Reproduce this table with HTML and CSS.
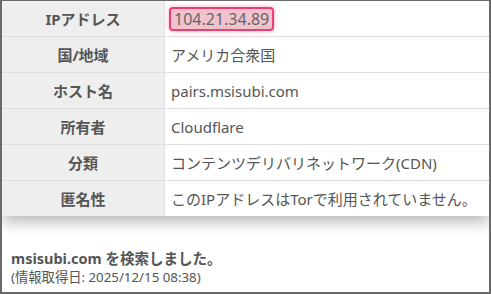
FILE: index.html
```html
<!DOCTYPE html>
<html lang="ja">
<head>
<meta charset="utf-8">
<link rel="stylesheet" href="styles.css">
</head>
<body>
<div class="frame">
  <table class="info">
    <tr><th>IPアドレス</th><td><span class="ip">104.21.34.89</span></td></tr>
    <tr><th>国/地域</th><td>アメリカ合衆国</td></tr>
    <tr><th>ホスト名</th><td>pairs.msisubi.com</td></tr>
    <tr><th>所有者</th><td>Cloudflare</td></tr>
    <tr><th>分類</th><td>コンテンツデリバリネットワーク(CDN)</td></tr>
    <tr><th>匿名性</th><td>このIPアドレスはTorで利用されていません。</td></tr>
  </table>
  <div class="result">
    <p class="searched">msisubi.com を検索しました。</p>
    <p class="date">(情報取得日: 2025/12/15 08:38)</p>
  </div>
</div>
</body>
</html>
```
FILE: styles.css
```css
html, body {
  margin: 0;
  padding: 0;
  background: #fff;
}
body {
  font-family: "Noto Sans", "Noto Sans CJK JP", sans-serif;
  color: #555;
}
.frame {
  box-sizing: border-box;
  width: 491px;
  height: 294px;
  border: 2px solid #6a6a6a;
  border-top-width: 1px;
  overflow: hidden;
}
.info {
  width: 100%;
  border-collapse: collapse;
  box-shadow: 0 6px 14px rgba(0, 0, 0, 0.28);
  background: #fff;
}
.info tr {
  border-bottom: 1px solid #dedede;
}
.info tr:last-child {
  border-bottom: none;
}
.info th {
  width: 162px;
  height: 35px;
  padding: 0;
  background: #eeeeee;
  border-right: 1px solid #e2e2e2;
  font-weight: bold;
  font-size: 15px;
  color: #555;
  text-align: center;
  vertical-align: middle;
}
.info td {
  height: 35px;
  padding: 0 0 0 6px;
  font-size: 15px;
  color: #555;
  vertical-align: middle;
}
.ip {
  display: inline-block;
  padding: 0 3px;
  margin-left: -2px;
  line-height: 20px;
  font-size: 16px;
  background: #f2c3cd;
  border: 2px solid #ea3f72;
  border-radius: 4px;
  box-shadow: 0 0 4px rgba(234, 63, 114, 0.45);
  color: #666;
}
.result {
  padding: 32px 0 0 9px;
}
.result p {
  margin: 0;
}
.searched {
  font-weight: bold;
  font-size: 14.5px;
  line-height: 20px;
}
.date {
  font-size: 13.3px;
  line-height: 19px;
}
```
